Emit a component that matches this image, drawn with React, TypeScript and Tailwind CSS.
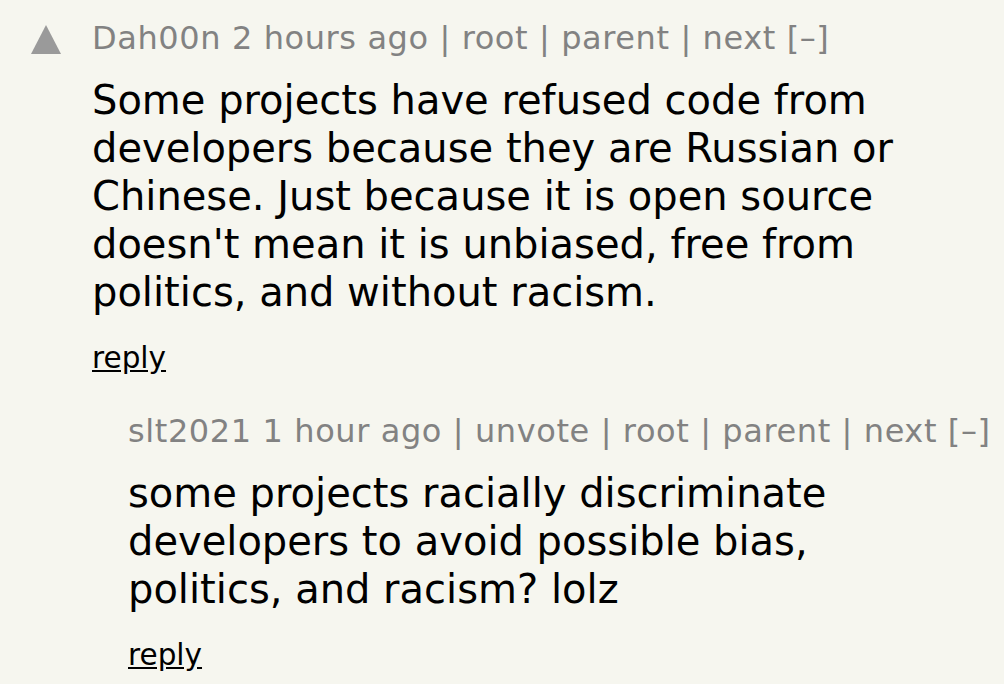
import React from 'react';

const font = { fontFamily: 'Verdana, "DejaVu Sans", Geneva, sans-serif' };

type Comment = {
  user: string;
  age: string;
  links: string[];
  lines: string[];
  voted?: boolean;
};

const comments: Comment[] = [
  {
    user: 'Dah00n',
    age: '2 hours ago',
    links: ['root', 'parent', 'next'],
    lines: [
      'Some projects have refused code from',
      'developers because they are Russian or',
      'Chinese. Just because it is open source',
      "doesn't mean it is unbiased, free from",
      'politics, and without racism.',
    ],
  },
  {
    user: 'slt2021',
    age: '1 hour ago',
    links: ['unvote', 'root', 'parent', 'next'],
    lines: [
      'some projects racially discriminate',
      'developers to avoid possible bias,',
      'politics, and racism? lolz',
    ],
    voted: true,
  },
];

const CommentRow: React.FC<{ c: Comment; nested?: boolean }> = ({ c, nested }) => (
  <div className={`flex ${nested ? 'pl-[36px] mt-[37px]' : ''}`}>
    <div className="w-[92px] shrink-0 flex justify-start pl-[31px] pt-[5px]">
      {!c.voted && !nested && (
        <svg className="block" width="30" height="29" viewBox="0 0 30 29">
          <polygon points="15,0 30,29 0,29" fill="#9a9a9a" />
        </svg>
      )}
    </div>
    <div className="flex flex-col">
      <div className="text-[32px] tracking-[0.6px] leading-[36px] text-[#828282] whitespace-nowrap">
        {c.user} {c.age}
        {c.links.map((l) => (
          <span key={l}> | {l}</span>
        ))}{' '}
        [–]
      </div>
      <div className="mt-[20px] text-[40px] leading-[48px] text-black whitespace-nowrap">
        {c.lines.map((line, i) => (
          <div key={i}>{line}</div>
        ))}
      </div>
      <div className="mt-[24px] text-[29.5px] leading-[36px] text-black underline">reply</div>
    </div>
  </div>
);

export default function App() {
  return (
    <div className="min-h-[684px] w-full bg-[#f6f6ef] pt-[20px] overflow-hidden" style={font}>
      <CommentRow c={comments[0]} />
      <CommentRow c={comments[1]} nested />
    </div>
  );
}
